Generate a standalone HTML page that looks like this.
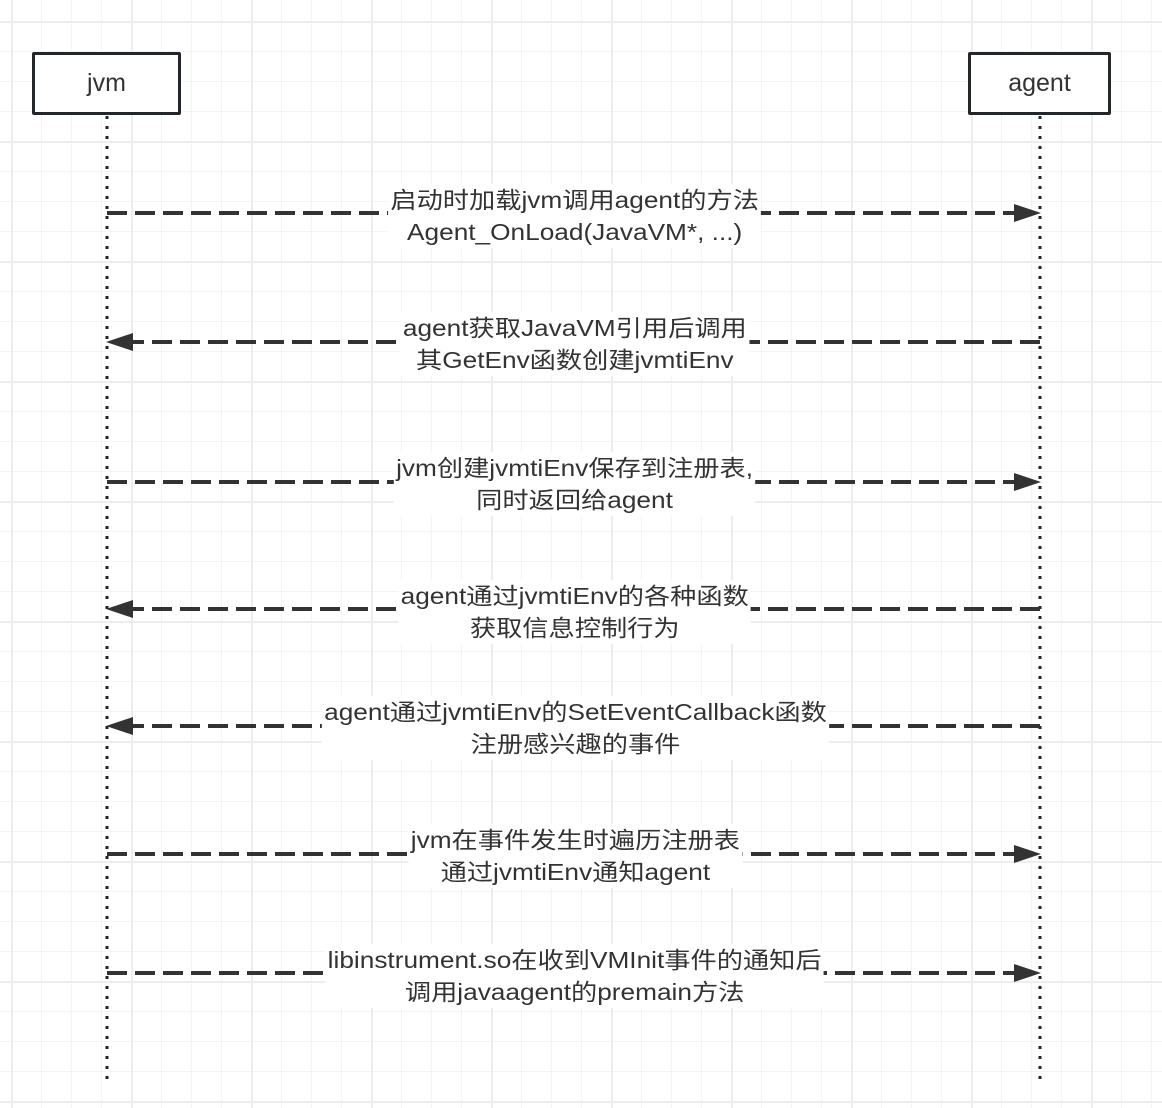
<!DOCTYPE html>
<html><head><meta charset="utf-8"><style>
html,body{margin:0;padding:0;}
body{width:1162px;height:1108px;position:relative;overflow:hidden;background:#fff;
background-image:
linear-gradient(to right,#ededed 0,#ededed 2px,transparent 2px),
linear-gradient(to bottom,#ededed 0,#ededed 2px,transparent 2px),
linear-gradient(to right,#f4f4f4 0,#f4f4f4 1px,transparent 1px),
linear-gradient(to bottom,#f4f4f4 0,#f4f4f4 1px,transparent 1px);
background-size:120px 120px,120px 120px,30px 30px,30px 30px;
background-position:11px 21px,11px 21px,11px 21px,11px 21px;}
svg{position:absolute;left:0;top:0;}
.lbl{position:absolute;left:75px;width:1000px;text-align:center;font-family:"Liberation Sans","Noto Sans CJK SC",sans-serif;font-size:23px;line-height:32px;color:#333;}
.lbl span{background:#fff;display:inline-block;padding:0 2px;transform:scaleX(1.14);}
.box{position:absolute;border:3px solid #23272b;background:#fff;font-family:"Liberation Sans",sans-serif;font-size:25px;color:#333;text-align:center;box-sizing:border-box;border-radius:2px;}
</style></head><body>
<svg width="1162" height="1108">
<g stroke="#222" stroke-width="3" stroke-dasharray="3 7">
<line x1="107" y1="116" x2="107" y2="1080"/>
<line x1="1040" y1="116" x2="1040" y2="1080"/>
</g>
<g stroke="#333" stroke-width="4" stroke-dasharray="20 8" fill="none">
<line x1="107" y1="213" x2="1016" y2="213"/>
<line x1="1040" y1="342" x2="130" y2="342"/>
<line x1="107" y1="482" x2="1016" y2="482"/>
<line x1="1040" y1="609" x2="130" y2="609"/>
<line x1="1040" y1="726" x2="130" y2="726"/>
<line x1="107" y1="854" x2="1016" y2="854"/>
<line x1="107" y1="973" x2="1016" y2="973"/>
</g>
<g fill="#333">
<polygon points="1014,204 1041,213 1014,222"/>
<polygon points="133,333 106,342 133,351"/>
<polygon points="1014,473 1041,482 1014,491"/>
<polygon points="133,600 106,609 133,618"/>
<polygon points="133,717 106,726 133,735"/>
<polygon points="1014,845 1041,854 1014,863"/>
<polygon points="1014,964 1041,973 1014,982"/>
</g>
</svg>
<div class="box" style="left:32px;top:52px;width:149px;height:63px;line-height:57px;">jvm</div>
<div class="box" style="left:968px;top:52px;width:143px;height:63px;line-height:57px;">agent</div>
<div class="lbl" style="top:184px"><span>启动时加载jvm调用agent的方法<br>Agent_OnLoad(JavaVM*, ...)</span></div>
<div class="lbl" style="top:312px"><span>agent获取JavaVM引用后调用<br>其GetEnv函数创建jvmtiEnv</span></div>
<div class="lbl" style="top:452px"><span>jvm创建jvmtiEnv保存到注册表,<br>同时返回给agent</span></div>
<div class="lbl" style="top:580px"><span>agent通过jvmtiEnv的各种函数<br>获取信息控制行为</span></div>
<div class="lbl" style="top:696px"><span>agent通过jvmtiEnv的SetEventCallback函数<br>注册感兴趣的事件</span></div>
<div class="lbl" style="top:824px"><span>jvm在事件发生时遍历注册表<br>通过jvmtiEnv通知agent</span></div>
<div class="lbl" style="top:944px"><span>libinstrument.so在收到VMInit事件的通知后<br>调用javaagent的premain方法</span></div>
</body></html>
